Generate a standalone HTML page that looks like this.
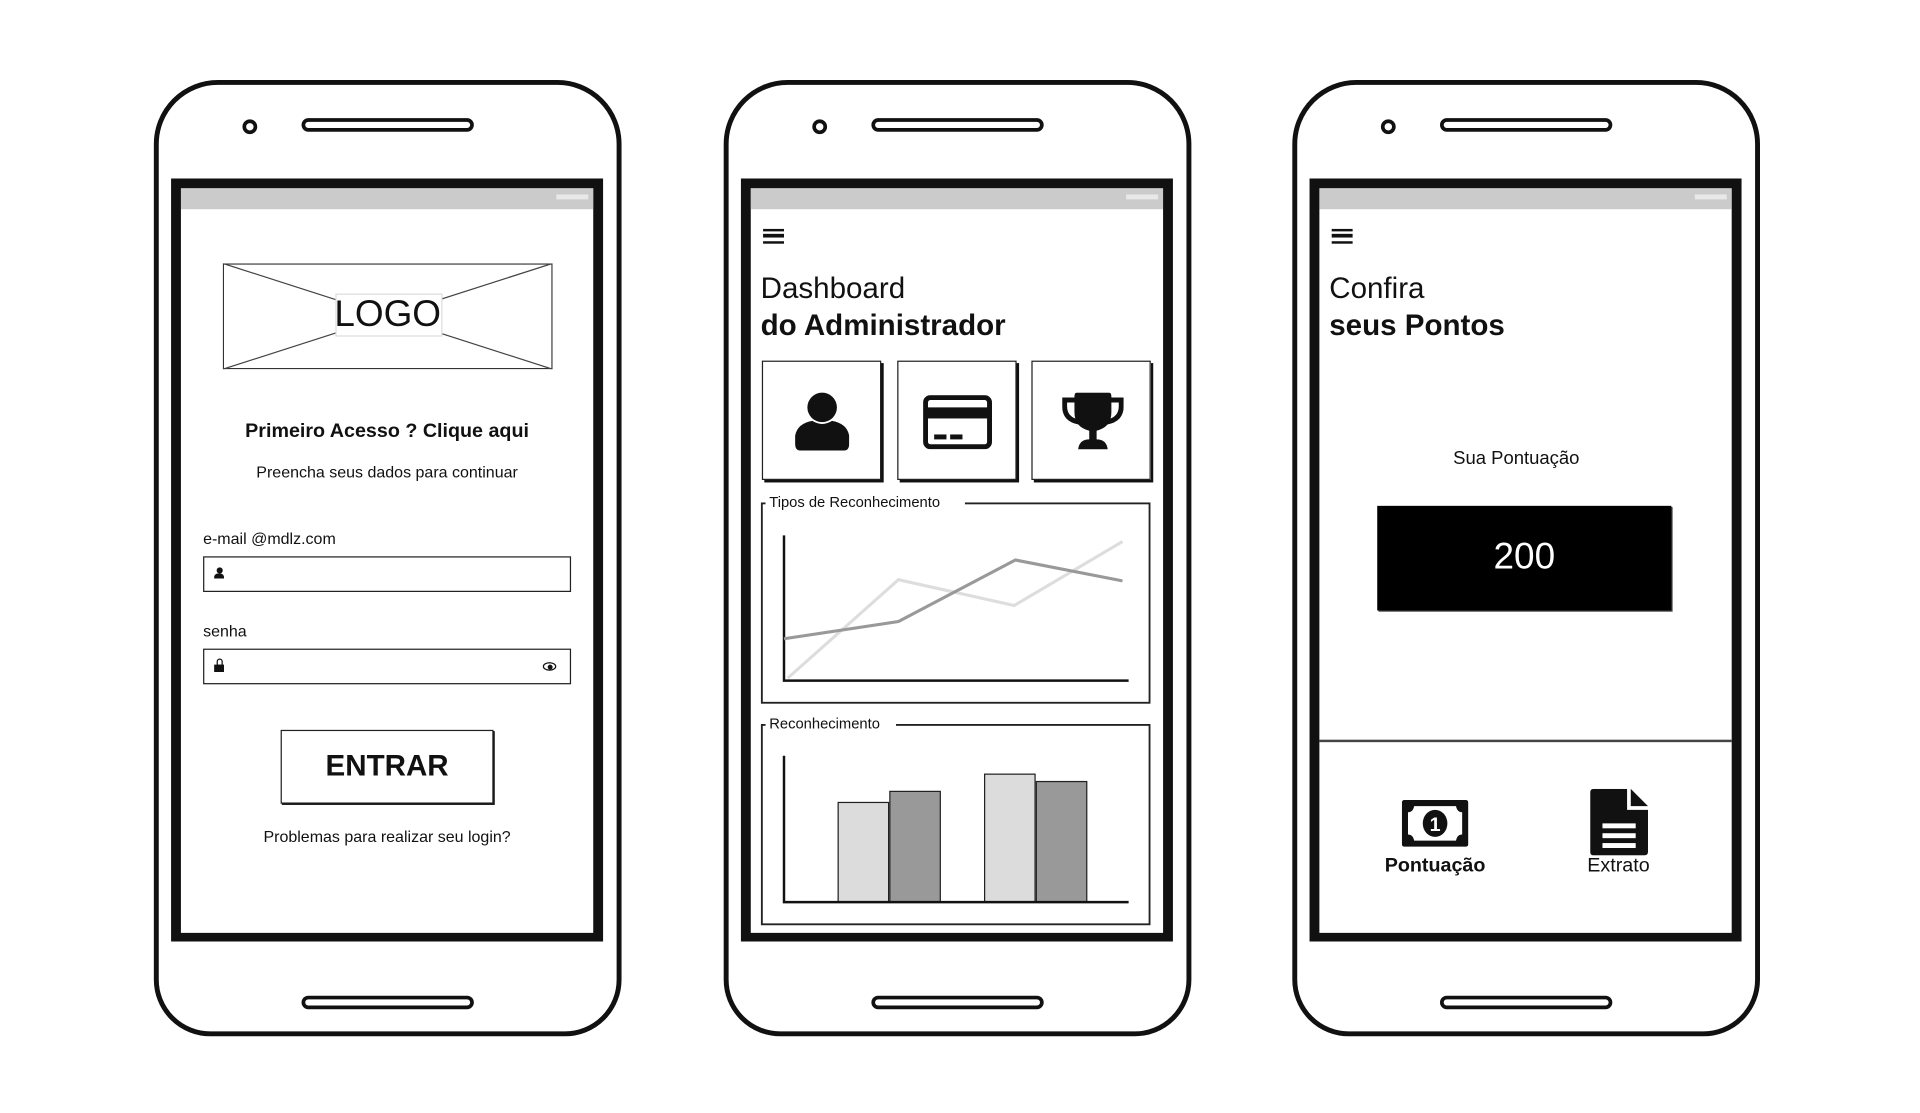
<!DOCTYPE html>
<html><head><meta charset="utf-8"><style>
*{margin:0;padding:0;box-sizing:border-box}
html,body{width:1920px;height:1112px;overflow:hidden;background:#fff;font-family:"Liberation Sans",sans-serif;color:#111}
#s{position:absolute;left:0;top:0;width:1560px;height:904px;transform:scale(1.23077);transform-origin:0 0}
.a{position:absolute}
.ph{position:absolute;top:65px;width:380px;height:777px;border:4px solid #111;border-radius:52px 52px 46px 46px}
.cam{position:absolute;left:68px;top:28px;width:12px;height:12px;border:3px solid #111;border-radius:50%}
.spk{position:absolute;left:116px;width:140px;height:11px;border:3px solid #111;border-radius:8px}
.scr{position:absolute;left:10px;top:76px;width:351px;height:620px;border:8px solid #111;border-bottom-width:7px;overflow:hidden;background:#fff}
.sb{position:absolute;left:0;top:0;right:0;height:17px;background:#cbcbcb}
.sb i{position:absolute;right:4px;top:5px;width:26px;height:4px;background:#e8e8e8}
.c{text-align:center;white-space:nowrap}
.ham{position:absolute;left:10px;top:33px;width:17px;height:12px;border-top:2.5px solid #111;border-bottom:2.5px solid #111}
.ham:after{content:"";position:absolute;left:0;right:0;top:2.2px;height:2.5px;background:#111}
.tile{position:absolute;top:140px;width:97px;height:97px;border:1.5px solid #222;box-shadow:2px 2px 0 #111}
</style></head><body><div id="s">

<!-- phone 1 -->
<div class="ph" style="left:125px"><div class="cam"></div><div class="spk" style="top:27px"></div><div class="spk" style="top:740px"></div>
<div class="scr"><div class="sb"><i></i></div>
<svg class="a" style="left:34px;top:61px" width="268" height="86"><rect x="0.5" y="0.5" width="267" height="85" fill="none" stroke="#333"/><line x1="0" y1="0" x2="268" y2="86" stroke="#444"/><line x1="268" y1="0" x2="0" y2="86" stroke="#444"/><rect x="92" y="25" width="86" height="34" fill="#fff" stroke="#ddd"/></svg>
<div class="a c" style="left:34px;width:268px;top:86px;font-size:30px;line-height:34px">LOGO</div>
<div class="a c" style="left:0;width:335px;top:189px;font-size:16px;font-weight:bold">Primeiro Acesso ? Clique aqui</div>
<div class="a c" style="left:0;width:335px;top:223px;font-size:13px">Preencha seus dados para continuar</div>
<div class="a" style="left:18px;top:277px;font-size:13px">e-mail @mdlz.com</div>
<div class="a" style="left:18px;top:299px;width:299px;height:29px;border:1.5px solid #222"><div class="a" style="left:8px;top:8px;width:8px;height:10px"><div style="width:5px;height:5px;border-radius:50%;background:#111;margin-left:1.5px"></div><div style="width:8px;height:4px;background:#111;border-radius:3px 3px 0 0"></div></div></div>
<div class="a" style="left:18px;top:352px;font-size:13px">senha</div>
<div class="a" style="left:18px;top:374px;width:299px;height:29px;border:1.5px solid #222"><div class="a" style="left:8px;top:9px;width:8px;height:6px;background:#111;margin-top:3px"></div><div class="a" style="left:9.5px;top:7px;width:5px;height:6px;border:1.5px solid #111;border-radius:3px 3px 0 0"></div><div class="a" style="left:275px;top:10px;width:11px;height:7px;border:1.5px solid #111;border-radius:50%"></div><div class="a" style="left:279px;top:12px;width:4px;height:4px;background:#111;border-radius:50%"></div></div>
<div class="a c" style="left:81px;top:440px;width:173px;height:60px;border:1.5px solid #222;box-shadow:1px 1px 0 #111;font-size:24px;font-weight:bold;line-height:57px">ENTRAR</div>
<div class="a c" style="left:0;width:335px;top:519px;font-size:13px">Problemas para realizar seu login?</div>
</div></div>

<!-- phone 2 -->
<div class="ph" style="left:588px"><div class="cam"></div><div class="spk" style="top:27px"></div><div class="spk" style="top:740px"></div>
<div class="scr"><div class="sb"><i></i></div>
<div class="ham"></div>
<div class="a" style="left:8px;top:67px;font-size:24px;line-height:30px">Dashboard<br><b>do Administrador</b></div>
<div class="tile" style="left:9px"><svg class="a" style="left:26px;top:24px" width="44" height="48" viewBox="0 0 44 48"><circle cx="22" cy="13" r="12" fill="#111"/><path d="M4 48 Q0 48 0 42 L0 36 Q2 26 14 24 Q22 29 30 24 Q42 26 44 36 L44 42 Q44 48 40 48Z" fill="#111"/></svg></div>
<div class="tile" style="left:119px"><svg class="a" style="left:20px;top:27px" width="56" height="44" viewBox="0 0 56 44"><rect x="2" y="2" width="52" height="40" rx="4" fill="none" stroke="#111" stroke-width="4"/><rect x="2" y="10" width="52" height="9" fill="#111"/><rect x="9" y="32" width="10" height="4" fill="#111"/><rect x="22" y="32" width="10" height="4" fill="#111"/></svg></div>
<div class="tile" style="left:228px"><svg class="a" style="left:24px;top:25px" width="50" height="48" viewBox="0 0 50 48"><path d="M12 0 H38 Q40 0 40 3 V16 Q40 28 28 31 V38 Q36 38 37 46 H13 Q14 38 22 38 V31 Q10 28 10 16 V3 Q10 0 12 0Z" fill="#111"/><path d="M11 6 H2 V11 Q2 22 14 24" fill="none" stroke="#111" stroke-width="4"/><path d="M39 6 H48 V11 Q48 22 36 24" fill="none" stroke="#111" stroke-width="4"/></svg></div>
<svg class="a" style="left:-2px;top:245px" width="340" height="360">
<rect x="11" y="11" width="315" height="162" fill="none" stroke="#222" stroke-width="1.5"/>
<rect x="14" y="4" width="162" height="14" fill="#fff"/>
<text x="17" y="14" font-size="12" font-family="Liberation Sans" fill="#111">Tipos de Reconhecimento</text>
<path d="M29 37 V155 H309" fill="none" stroke="#111" stroke-width="2"/>
<polyline points="32,153 122,73 216,94 304,42" fill="none" stroke="#ddd" stroke-width="2.5"/>
<polyline points="29,121 122,107 217,57 304,74" fill="none" stroke="#999" stroke-width="2.5"/>
<rect x="11" y="191" width="315" height="162" fill="none" stroke="#222" stroke-width="1.5"/>
<rect x="14" y="184" width="106" height="14" fill="#fff"/>
<text x="17" y="194" font-size="12" font-family="Liberation Sans" fill="#111">Reconhecimento</text>
<rect x="73" y="254" width="41" height="81" fill="#dcdcdc" stroke="#222"/>
<rect x="115" y="245" width="41" height="90" fill="#999" stroke="#222"/>
<rect x="192" y="231" width="41" height="104" fill="#dcdcdc" stroke="#222"/>
<rect x="234" y="237" width="41" height="98" fill="#999" stroke="#222"/>
<path d="M29 216 V335 H309" fill="none" stroke="#111" stroke-width="2"/>
</svg>
</div></div>

<!-- phone 3 -->
<div class="ph" style="left:1050px"><div class="cam"></div><div class="spk" style="top:27px"></div><div class="spk" style="top:740px"></div>
<div class="scr"><div class="sb"><i></i></div>
<div class="ham"></div>
<div class="a" style="left:8px;top:67px;font-size:24px;line-height:30px">Confira<br><b>seus Pontos</b></div>
<div class="a c" style="left:0;width:320px;top:211px;font-size:15px">Sua Pontuação</div>
<div class="a c" style="left:47px;top:258px;width:239px;height:85px;background:#000;box-shadow:1px 1px 0 #444;color:#fff;font-size:30px;line-height:84px">200</div>
<div class="a" style="left:0;right:0;top:448px;height:1.5px;background:#444"></div>
<svg class="a" style="left:67px;top:497px" width="54" height="38" viewBox="0 0 54 38"><rect x="0" y="0" width="54" height="38" rx="2" fill="#111"/><path d="M10 5 H44 Q45 10 49 10 V28 Q45 28 44 33 H10 Q9 28 5 28 V10 Q9 10 10 5Z" fill="#fff"/><ellipse cx="27" cy="19" rx="10" ry="11" fill="#111"/><text x="27" y="25" text-anchor="middle" font-size="16" font-weight="bold" font-family="Liberation Sans" fill="#fff">1</text></svg>
<div class="a c" style="left:44px;width:100px;top:542px;font-size:16px;font-weight:bold">Pontuação</div>
<svg class="a" style="left:220px;top:488px" width="47" height="54" viewBox="0 0 47 54"><path d="M3 0 H30 V17 H47 V51 Q47 54 44 54 H3 Q0 54 0 51 V3 Q0 0 3 0Z" fill="#111"/><path d="M33 0 L47 14 H33Z" fill="#111"/><rect x="10" y="28" width="27" height="4" fill="#fff"/><rect x="10" y="36" width="27" height="4" fill="#fff"/><rect x="10" y="44" width="27" height="4" fill="#fff"/></svg>
<div class="a c" style="left:193px;width:100px;top:542px;font-size:16px">Extrato</div>
</div></div>

</div></body></html>
